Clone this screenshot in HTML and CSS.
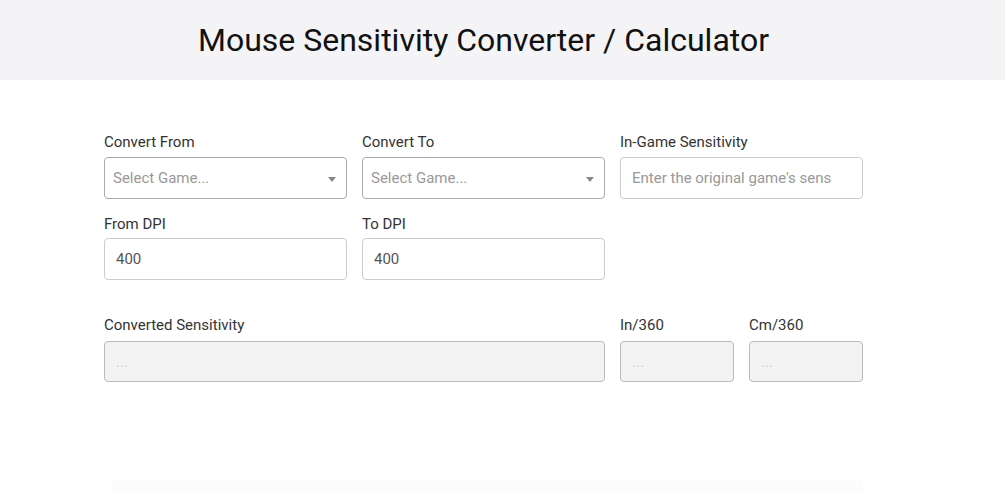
FILE: index.html
```html
<!DOCTYPE html>
<html>
<head>
<meta charset="utf-8">
<link rel="stylesheet" href="styles.css">
</head>
<body>
<header class="hero">
  <div class="wrap">
    <h1 class="title">Mouse Sensitivity Converter / Calculator</h1>
  </div>
</header>
<main class="wrap form">
  <div class="row">
    <div class="field">
      <label class="label">Convert From</label>
      <div class="select"><span class="ph">Select Game...</span><span class="caret"></span></div>
    </div>
    <div class="field">
      <label class="label">Convert To</label>
      <div class="select"><span class="ph">Select Game...</span><span class="caret"></span></div>
    </div>
    <div class="field">
      <label class="label">In-Game Sensitivity</label>
      <input class="input" type="text" placeholder="Enter the original game's sens">
    </div>
  </div>
  <div class="row second">
    <div class="field">
      <label class="label">From DPI</label>
      <input class="input" type="text" value="400">
    </div>
    <div class="field">
      <label class="label">To DPI</label>
      <input class="input" type="text" value="400">
    </div>
    <div class="field"></div>
  </div>
  <div class="row result">
    <div class="field wide">
      <label class="label">Converted Sensitivity</label>
      <input class="input out" type="text" placeholder="..." disabled>
    </div>
    <div class="field small">
      <label class="label">In/360</label>
      <input class="input out" type="text" placeholder="..." disabled>
    </div>
    <div class="field small">
      <label class="label">Cm/360</label>
      <input class="input out" type="text" placeholder="..." disabled>
    </div>
  </div>
</main>
<div class="footbar"></div>
</body>
</html>
```
FILE: styles.css
```css
* { box-sizing: border-box; }
html, body { margin: 0; padding: 0; background: #fff; }
body { font-family: Roboto, "Noto Sans", sans-serif; color: #333; }
.wrap { width: 759px; margin-left: 104px; }
.hero { background: #f4f4f6; height: 80px; }
.hero .wrap { height: 80px; display: flex; align-items: center; justify-content: center; }
.title { margin: 0; font-weight: 400; font-size: 32px; color: #111; letter-spacing: 0; }
.form { padding-top: 52px; }
.row { display: flex; gap: 15px; margin-bottom: 15px; }
.row.result { margin-top: 35px; margin-bottom: 0; }
.field { flex: 1 1 0; display: flex; flex-direction: column; }
.field.wide { flex: 0 0 501px; }
.field.small { flex: 0 0 114px; }
.label { font-size: 15px; line-height: 20px; color: #333; margin-bottom: 5px; }
.second .label { margin-bottom: 4px; }
.result .label { margin-bottom: 6px; }
.select { height: 42px; border: 1px solid #aaa; border-radius: 4px; display: flex; align-items: center; justify-content: space-between; padding: 0 10px 0 8px; background: #fff; }
.ph { font-size: 15px; color: #999; }
.caret { width: 0; height: 0; border-left: 4px solid transparent; border-right: 4px solid transparent; border-top: 5px solid #888; margin-top: 3px; }
.input { height: 42px; border: 1px solid #ccc; border-radius: 4px; padding: 0 11px; font-family: Roboto, "Noto Sans", sans-serif; font-size: 15px; color: #555; background: #fff; outline: none; width: 100%; }
.input::placeholder { color: #999; }
.input.out { background: #f3f3f3; border-color: #bbb; height: 41px; }
.input.out::placeholder { color: #ccc; }
.footbar { width: 751px; height: 13px; margin: 97px 0 0 112px; background: #fcfcfc; }
```
